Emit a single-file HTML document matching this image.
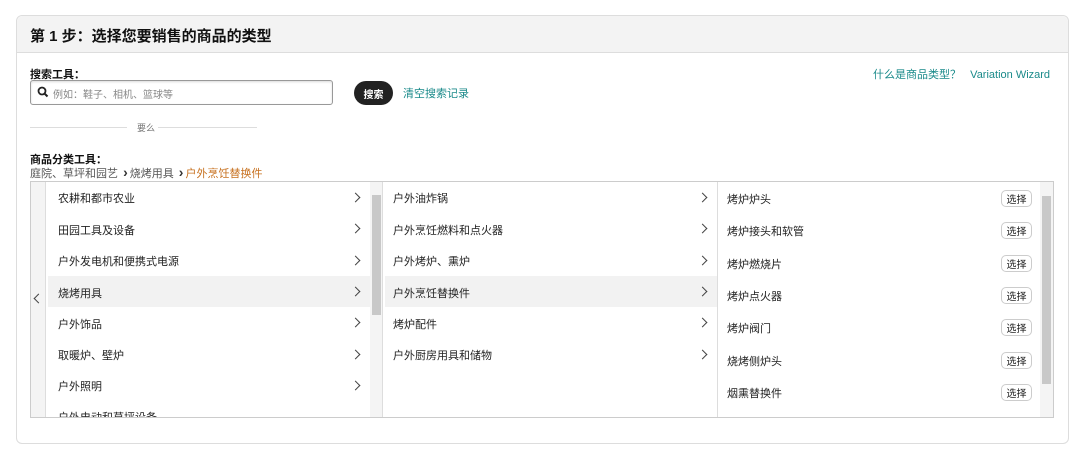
<!DOCTYPE html>
<html><head><meta charset="utf-8">
<style>
*{margin:0;padding:0;box-sizing:border-box}
body{width:1080px;height:459px;background:#fff;font-family:"Liberation Sans","Noto Sans CJK SC",sans-serif;position:relative;overflow:hidden;color:#111}
.a{position:absolute;white-space:nowrap}
.card{left:16px;top:15px;width:1053px;height:429px;border:1px solid #ddd;border-radius:6px;background:#fff}
.hdr{left:17px;top:16px;width:1051px;height:37px;background:#f3f3f3;border-bottom:1px solid #ddd;border-radius:6px 6px 0 0}
.row{font-size:11px;color:#222}
.chev{position:absolute;width:7px;height:7px;border-right:1.5px solid #444;border-top:1.5px solid #444;transform:rotate(45deg)}
.btn{position:absolute;left:1001px;width:31px;height:17px;border:1px solid #ccc;border-radius:5px;font-size:10px;display:flex;align-items:center;justify-content:center;color:#222;background:#fff}
.bc{font-size:14px;color:#333;font-weight:bold;margin:0 2px}
</style></head><body>
<div class="a card"></div>
<div class="a hdr"></div>
<div class="a" style="left:30px;top:25px;font-size:15px;font-weight:bold;color:#111">第 1 步：选择您要销售的商品的类型</div>
<div class="a" style="left:30px;top:66px;font-size:11px;font-weight:bold">搜索工具：</div>
<div class="a" style="left:873px;top:66px;font-size:11px;color:#1a8a8a">什么是商品类型？&nbsp;&nbsp;&nbsp;Variation Wizard</div>
<div class="a" style="left:30px;top:80px;width:303px;height:25px;border:1px solid #999;border-radius:3px;box-shadow:inset 0 1px 2px rgba(0,0,0,.15)"></div>
<svg class="a" style="left:37px;top:86px" width="12" height="12" viewBox="0 0 12 12"><circle cx="5" cy="5" r="3.5" fill="none" stroke="#222" stroke-width="1.8"/><path d="M7.5 7.5L10.5 10.5" stroke="#222" stroke-width="2"/></svg>
<div class="a" style="left:53px;top:86px;font-size:10px;color:#888">例如：鞋子、相机、篮球等</div>
<div class="a" style="left:354px;top:81px;width:39px;height:24px;border-radius:12px;background:#222;color:#fff;font-size:10px;font-weight:bold;display:flex;align-items:center;justify-content:center">搜索</div>
<div class="a" style="left:403px;top:85px;font-size:11px;color:#1a8a8a">清空搜索记录</div>
<div class="a" style="left:30px;top:127px;width:97px;border-top:1px solid #ddd"></div>
<div class="a" style="left:137px;top:121px;font-size:9px;color:#777">要么</div>
<div class="a" style="left:158px;top:127px;width:99px;border-top:1px solid #ddd"></div>
<div class="a" style="left:30px;top:151px;font-size:11px;font-weight:bold">商品分类工具：</div>
<div class="a" style="left:30px;top:165px;font-size:11px;color:#555;line-height:15px">庭院、草坪和园艺 <span class="bc">›</span>烧烤用具 <span class="bc">›</span><span style="color:#c7701e">户外烹饪替换件</span></div>
<div class="a" style="left:30px;top:181px;width:1024px;height:237px;border:1px solid #ccc;background:#fff"></div>
<div class="a" style="left:31px;top:182px;width:15px;height:235px;background:#f4f4f4;border-right:1px solid #ddd"></div>
<div class="a" style="left:35px;top:295px;width:7px;height:7px;border-left:1.5px solid #444;border-bottom:1.5px solid #444;transform:rotate(45deg)"></div>
<div class="a" style="left:48px;top:276px;width:322px;height:31px;background:#f2f2f2"></div>
<div class="a" style="left:385px;top:276px;width:333px;height:31px;background:#f2f2f2"></div>
<div class="a" style="left:370px;top:182px;width:13px;height:235px;background:#f4f4f4;border-right:1px solid #ddd"></div>
<div class="a" style="left:372px;top:195px;width:9px;height:120px;background:#c8c8c8"></div>
<div class="a" style="left:717px;top:182px;width:1px;height:235px;background:#ddd"></div>
<div class="a" style="left:1040px;top:182px;width:13px;height:235px;background:#f4f4f4"></div>
<div class="a" style="left:1042px;top:196px;width:9px;height:188px;background:#c8c8c8"></div>

<div class="a row" style="left:58px;top:190px">农耕和都市农业</div>
<div class="a row" style="left:58px;top:222px">田园工具及设备</div>
<div class="a row" style="left:58px;top:253px">户外发电机和便携式电源</div>
<div class="a row" style="left:58px;top:285px">烧烤用具</div>
<div class="a row" style="left:58px;top:316px">户外饰品</div>
<div class="a row" style="left:58px;top:347px">取暖炉、壁炉</div>
<div class="a row" style="left:58px;top:378px">户外照明</div>
<div class="a row" style="left:58px;top:409px;height:8px;overflow:hidden">户外电动和草坪设备</div>
<div class="chev" style="left:352px;top:194px"></div>
<div class="chev" style="left:352px;top:225px"></div>
<div class="chev" style="left:352px;top:257px"></div>
<div class="chev" style="left:352px;top:288px"></div>
<div class="chev" style="left:352px;top:319px"></div>
<div class="chev" style="left:352px;top:351px"></div>
<div class="chev" style="left:352px;top:382px"></div>

<div class="a row" style="left:393px;top:190px">户外油炸锅</div>
<div class="a row" style="left:393px;top:222px">户外烹饪燃料和点火器</div>
<div class="a row" style="left:393px;top:253px">户外烤炉、熏炉</div>
<div class="a row" style="left:393px;top:285px">户外烹饪替换件</div>
<div class="a row" style="left:393px;top:316px">烤炉配件</div>
<div class="a row" style="left:393px;top:347px">户外厨房用具和储物</div>
<div class="chev" style="left:699px;top:194px"></div>
<div class="chev" style="left:699px;top:225px"></div>
<div class="chev" style="left:699px;top:257px"></div>
<div class="chev" style="left:699px;top:288px"></div>
<div class="chev" style="left:699px;top:319px"></div>
<div class="chev" style="left:699px;top:351px"></div>

<div class="a row" style="left:727px;top:191px">烤炉炉头</div>
<div class="a row" style="left:727px;top:223px">烤炉接头和软管</div>
<div class="a row" style="left:727px;top:256px">烤炉燃烧片</div>
<div class="a row" style="left:727px;top:288px">烤炉点火器</div>
<div class="a row" style="left:727px;top:320px">烤炉阀门</div>
<div class="a row" style="left:727px;top:353px">烧烤侧炉头</div>
<div class="a row" style="left:727px;top:385px">烟熏替换件</div>
<div class="btn" style="top:190px">选择</div>
<div class="btn" style="top:222px">选择</div>
<div class="btn" style="top:255px">选择</div>
<div class="btn" style="top:287px">选择</div>
<div class="btn" style="top:319px">选择</div>
<div class="btn" style="top:352px">选择</div>
<div class="btn" style="top:384px">选择</div>
</body></html>
